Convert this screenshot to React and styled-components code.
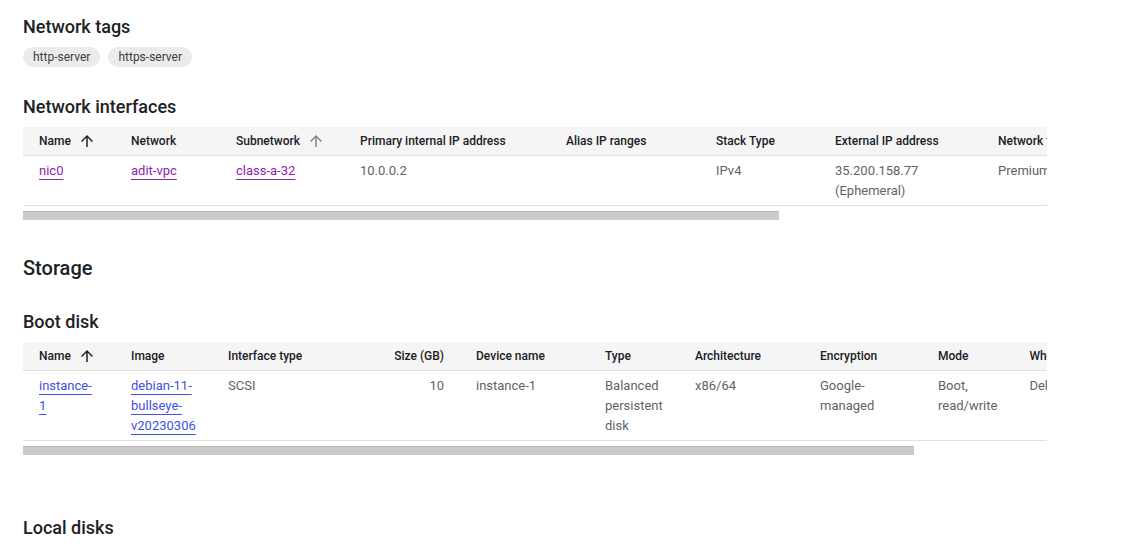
import styled, { createGlobalStyle } from 'styled-components'

const GlobalStyle = createGlobalStyle`
  body {
    margin: 0;
    background: #fff;
    font-family: Roboto, "Liberation Sans", Arial, sans-serif;
    color: #202124;
  }
`

const networkCols = [
  { key: 'name', label: 'Name', width: 92, sort: 'active' },
  { key: 'network', label: 'Network', width: 105 },
  { key: 'subnet', label: 'Subnetwork', width: 124, sort: 'idle' },
  { key: 'ip', label: 'Primary internal IP address', width: 206 },
  { key: 'alias', label: 'Alias IP ranges', width: 150 },
  { key: 'stack', label: 'Stack Type', width: 119 },
  { key: 'ext', label: 'External IP address', width: 163 },
  { key: 'tier', label: 'Network tier', width: 130 },
]

const networkRows = [
  {
    name: { link: 'nic0' },
    network: { link: 'adit-vpc' },
    subnet: { link: 'class-a-32' },
    ip: '10.0.0.2',
    alias: '',
    stack: 'IPv4',
    ext: ['35.200.158.77', '(Ephemeral)'],
    tier: 'Premium',
  },
]

const bootCols = [
  { key: 'name', label: 'Name', width: 92, sort: 'active' },
  { key: 'image', label: 'Image', width: 97 },
  { key: 'iface', label: 'Interface type', width: 136 },
  { key: 'size', label: 'Size (GB)', width: 112, align: 'right' },
  { key: 'device', label: 'Device name', width: 129 },
  { key: 'type', label: 'Type', width: 90 },
  { key: 'arch', label: 'Architecture', width: 125 },
  { key: 'enc', label: 'Encryption', width: 118 },
  { key: 'mode', label: 'Mode', width: 91 },
  { key: 'when', label: 'When deleting instance', width: 160 },
]

const bootRows = [
  {
    name: { link: 'instance-1' },
    image: { link: 'debian-11-bullseye-v20230306' },
    iface: 'SCSI',
    size: '10',
    device: 'instance-1',
    type: 'Balanced persistent disk',
    arch: 'x86/64',
    enc: 'Google-managed',
    mode: 'Boot, read/write',
    when: 'Delete disk',
  },
]

function SortArrow({ idle }) {
  return (
    <Arrow viewBox="0 0 24 24" $idle={idle}>
      <path d="M4 12l1.41 1.41L11 7.83V20h2V7.83l5.58 5.59L20 12l-8-8-8 8z" />
    </Arrow>
  )
}

function DataTable({ cols, rows, linkTone, thumb }) {
  const renderCell = (value) => {
    if (Array.isArray(value)) return value.map(v => <div key={v}>{v}</div>)
    if (value && typeof value === 'object') return <CellLink $tone={linkTone}>{value.link}</CellLink>
    return value
  }

  return (
    <>
      <TableClip>
        <Table>
          <colgroup>
            {cols.map(c => <col key={c.key} style={{ width: c.width }} />)}
          </colgroup>
          <thead>
            <tr>
              {cols.map(c => (
                <Th key={c.key} $align={c.align}>
                  <HeadInner>
                    {c.label}
                    {c.sort && <SortArrow idle={c.sort === 'idle'} />}
                  </HeadInner>
                </Th>
              ))}
            </tr>
          </thead>
          <tbody>
            {rows.map((r, i) => (
              <tr key={i}>
                {cols.map(c => (
                  <Td key={c.key} $align={c.align}>{renderCell(r[c.key])}</Td>
                ))}
              </tr>
            ))}
          </tbody>
        </Table>
      </TableClip>
      <ScrollTrack>
        <ScrollThumb style={{ width: thumb }} />
      </ScrollTrack>
    </>
  )
}

export default function App() {
  return (
    <Page>
      <GlobalStyle />
      <SectionTitle>Network tags</SectionTitle>
      <Chips>
        <Chip>http-server</Chip>
        <Chip>https-server</Chip>
      </Chips>

      <SectionTitle $top={28}>Network interfaces</SectionTitle>
      <DataTable cols={networkCols} rows={networkRows} linkTone="visited" thumb={756} />

      <PageTitle>Storage</PageTitle>

      <SectionTitle $top={28}>Boot disk</SectionTitle>
      <DataTable cols={bootCols} rows={bootRows} linkTone="fresh" thumb={891} />

      <SectionTitle $top={60}>Local disks</SectionTitle>
    </Page>
  )
}

const Page = styled.div`
  padding: 15px 0 0 23px;
  width: 1024px;
  overflow: hidden;
  height: 535px;
`
const SectionTitle = styled.h2`
  margin: ${p => p.$top || 0}px 0 0;
  font-size: 18px;
  font-weight: 500;
  line-height: 24px;
  color: #202124;
`
const PageTitle = styled.h1`
  margin: 33px 0 0;
  font-size: 20px;
  font-weight: 500;
  line-height: 28px;
  color: #202124;
`
const Chips = styled.div`
  display: flex;
  gap: 8px;
  margin-top: 8px;
`
const Chip = styled.span`
  display: inline-flex;
  align-items: center;
  height: 20px;
  padding: 0 10px;
  border-radius: 10px;
  background: #ebebeb;
  font-size: 12px;
  color: #3c4043;
`
const TableClip = styled.div`
  margin-top: 8px;
  width: 1024px;
  overflow: hidden;
`
const Table = styled.table`
  border-collapse: collapse;
  table-layout: fixed;
  width: max-content;
  min-width: 1024px;
`
const Th = styled.th`
  height: 28px;
  padding: 0 16px;
  background: #f5f5f5;
  border-bottom: 1px solid #e0e0e0;
  text-align: ${p => p.$align || 'left'};
  font-size: 12px;
  font-weight: 500;
  color: #202124;
  white-space: nowrap;
`
const HeadInner = styled.span`
  display: inline-flex;
  align-items: center;
  gap: 7px;
`
const Arrow = styled.svg`
  width: 18px;
  height: 18px;
  fill: ${p => (p.$idle ? '#80868b' : '#202124')};
`
const Td = styled.td`
  padding: 5px 16px 4px;
  border-bottom: 1px solid #e0e0e0;
  vertical-align: top;
  text-align: ${p => p.$align || 'left'};
  font-size: 13px;
  line-height: 20px;
  color: #5f6368;
  overflow: hidden;
  white-space: normal;
`
const CellLink = styled.a`
  color: ${p => (p.$tone === 'visited' ? '#8e24aa' : '#3f51e0')};
  text-decoration: underline;
  text-underline-offset: 4px;
  cursor: pointer;
`
const ScrollTrack = styled.div`
  margin-top: 5px;
  height: 10px;
`
const ScrollThumb = styled.div`
  height: 9px;
  background: #cbcbcb;
  border-top: 1px solid #b8b8b8;
  box-sizing: border-box;
`
